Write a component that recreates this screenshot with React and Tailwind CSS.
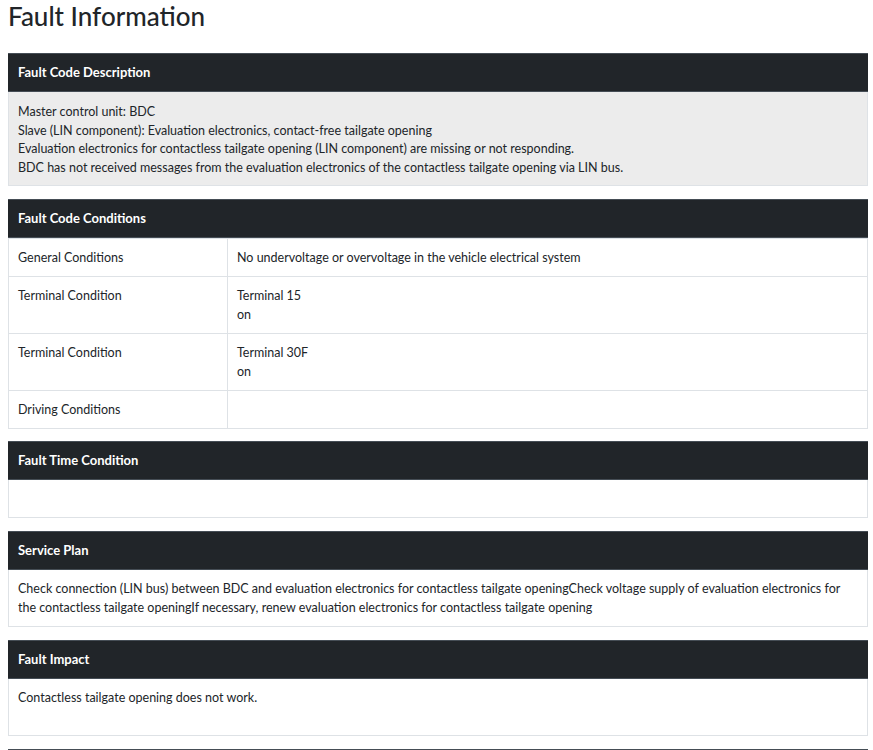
import React from "react";

const FONT = { fontFamily: '"Lato", "Noto Sans", sans-serif' };

function CardHeader({ title }) {
  return (
    <div className="h-[39px] flex items-center px-[10px] bg-[#212529] border-y border-[#454d55] text-white font-bold text-[13px]">
      {title}
    </div>
  );
}

function Card({ title, children, className = "mb-[13px]" }) {
  return (
    <div className={className}>
      <CardHeader title={title} />
      {children}
    </div>
  );
}

const conditions = [
  ["General Conditions", ["No undervoltage or overvoltage in the vehicle electrical system"]],
  ["Terminal Condition", ["Terminal 15", "on"]],
  ["Terminal Condition", ["Terminal 30F", "on"]],
  ["Driving Conditions", []],
];

export default function App() {
  return (
    <div className="pl-2 pr-[5px] bg-white text-[#212529] text-[12.5px] leading-[19px]" style={FONT}>
      <h2 className="text-[26px] leading-[30px] font-medium pt-[1px] mb-[22px]">Fault Information</h2>

      <Card title="Fault Code Description">
        <div className="bg-[#ececec] border-x border-b border-[#dee2e6] px-[9px] pt-[11px] pb-[7px] leading-[18.7px]">
          <div>Master control unit: BDC</div>
          <div>Slave (LIN component): Evaluation electronics, contact-free tailgate opening</div>
          <div>Evaluation electronics for contactless tailgate opening (LIN component) are missing or not responding.</div>
          <div>BDC has not received messages from the evaluation electronics of the contactless tailgate opening via LIN bus.</div>
        </div>
      </Card>

      <Card title="Fault Code Conditions" className="mb-[12px]">
        <table className="w-full border-collapse">
          <tbody>
            {conditions.map(([label, lines], i) => (
              <tr key={i}>
                <td className="w-[219px] border border-[#dee2e6] px-[9px] py-[9px] align-top">{label}</td>
                <td className="border border-[#dee2e6] px-[9px] py-[9px] align-top">
                  {lines.map((l, j) => (
                    <div key={j}>{l}</div>
                  ))}
                  {lines.length === 0 && <div>&nbsp;</div>}
                </td>
              </tr>
            ))}
          </tbody>
        </table>
      </Card>

      <Card title="Fault Time Condition">
        <div className="border-x border-b border-[#dee2e6] h-[38px]" />
      </Card>

      <Card title="Service Plan">
        <div className="border-x border-b border-[#dee2e6] px-[9px] py-[9px]">
          Check connection (LIN bus) between BDC and evaluation electronics for contactless tailgate openingCheck voltage supply of evaluation electronics for the contactless tailgate openingIf necessary, renew evaluation electronics for contactless tailgate opening
        </div>
      </Card>

      <Card title="Fault Impact">
        <div className="border-x border-b border-[#dee2e6] px-[9px] py-[9px]">
          Contactless tailgate opening does not work.
          <div>&nbsp;</div>
        </div>
      </Card>

      <Card title="Fault Code Reference">
        <div className="border-x border-b border-[#dee2e6] px-[9px] py-[9px]">&nbsp;</div>
      </Card>
    </div>
  );
}
